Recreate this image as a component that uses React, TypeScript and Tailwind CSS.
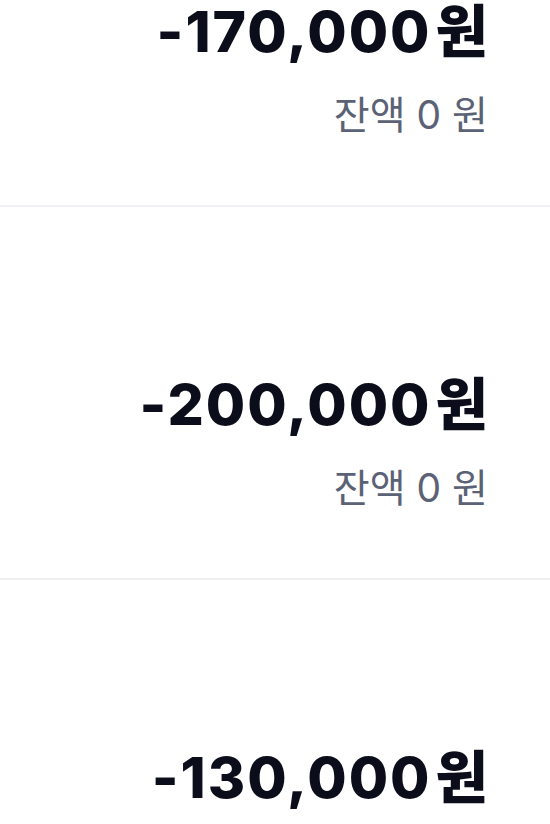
import React from 'react'

type Txn = {
  amount: string
  balance: string
}

const txns: Txn[] = [
  { amount: '-170,000', balance: '0' },
  { amount: '-200,000', balance: '0' },
  { amount: '-130,000', balance: '0' },
]

const font = { fontFamily: 'Inter, "Noto Sans CJK KR", sans-serif' }

function TxnRow({ txn, first }: { txn: Txn; first?: boolean }) {
  return (
    <div
      className={`flex flex-col items-end border-b-2 border-[#eef0f3] pr-[62px] pb-[66px] ${
        first ? 'pt-0' : 'pt-[166px]'
      }`}
    >
      <p className="text-[57px] leading-[64px] font-extrabold tracking-[2px] text-[#0b0e1a]">
        {txn.amount}
        <span className="ml-[4px] tracking-normal">원</span>
      </p>
      <p className="mt-[27px] text-[39px] leading-[48px] text-[#5b6275]">
        잔액 {txn.balance} 원
      </p>
    </div>
  )
}

export default function App() {
  return (
    <div className="h-[824px] overflow-hidden bg-white" style={font}>
      {txns.map((t, i) => (
        <TxnRow key={i} txn={t} first={i === 0} />
      ))}
    </div>
  )
}
